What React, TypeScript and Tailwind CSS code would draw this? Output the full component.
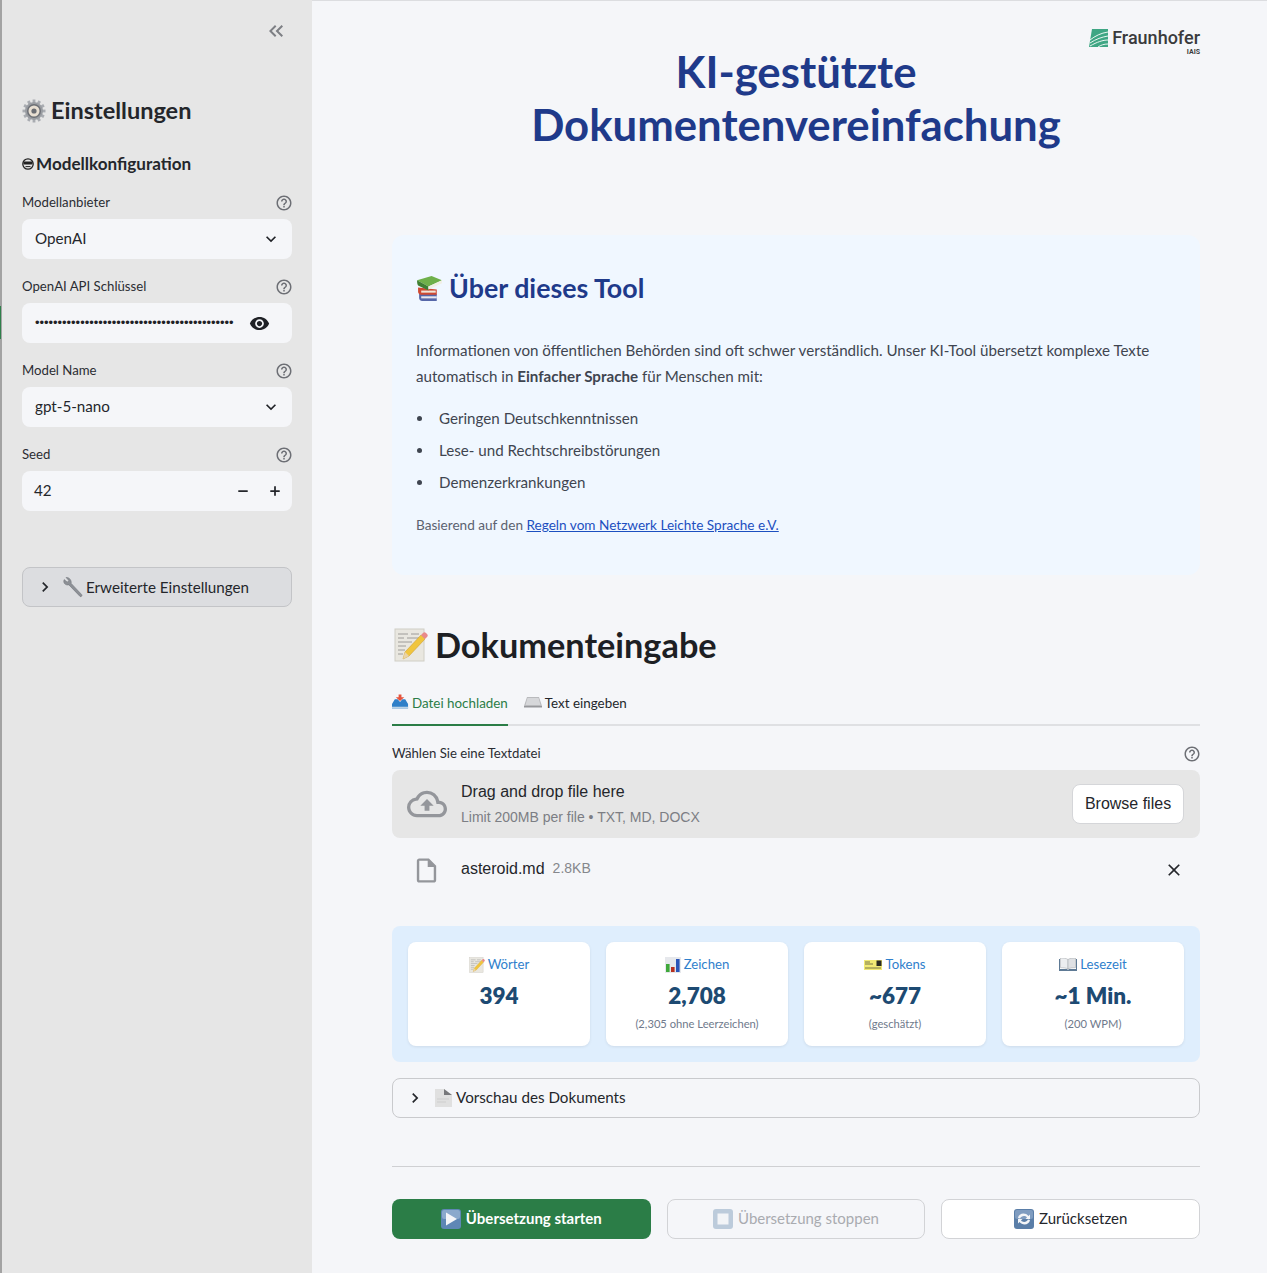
import {
  MdChevronRight,
  MdClose,
  MdExpandMore,
  MdKeyboardDoubleArrowLeft,
  MdOutlineCloudUpload,
  MdOutlineHelpOutline,
  MdOutlineInsertDriveFile,
  MdVisibility,
} from "react-icons/md";
import { Minus, Plus } from "lucide-react";

const Gear = () => (
  <svg viewBox="0 0 24 24" className="h-[24px] w-[24px] shrink-0">
    {[0, 30, 60, 90, 120, 150].map((a) => (
      <rect key={a} x="10.600" y="0.500" width="2.800" height="23" fill="#a9acb1" transform={`rotate(${a} 12 12)`} />
    ))}
    <circle cx="12" cy="12" r="9" fill="#9a9da2" />
    <circle cx="12" cy="12" r="7" fill="#6d7076" />
    <circle cx="12" cy="12" r="5.500" fill="#e8dfd2" />
    <circle cx="12" cy="12" r="2.600" fill="#6a6d73" />
  </svg>
);

const Robot = () => (
  <svg viewBox="0 0 12 12" className="h-[12px] w-[12px] shrink-0">
    <circle cx="6" cy="6" r="5.200" fill="none" stroke="#222" strokeWidth="1.300" />
    <rect x="1.500" y="3.600" width="9" height="3" rx="1" fill="#222" />
    <path d="M3.500 8.600h5" stroke="#222" strokeWidth="1" />
  </svg>
);

const Wrench = () => (
  <svg viewBox="0 0 22 22" className="h-[22px] w-[22px] shrink-0">
    <path d="M4 1.500 6.800 4.400 5.300 6.200 2.200 3.600C1 6 2.400 8.800 5.400 9l1.500-.1L18 20.400c1 .8 2.600-.6 1.800-1.700L9.200 7.400c.6-3-2-6.500-5.200-5.900Z" fill="#8d9096" stroke="#6b6e74" strokeWidth=".5" />
  </svg>
);

const Books = () => (
  <svg viewBox="0 0 26 26" className="h-[27px] w-[27px] shrink-0">
    <path d="M3 18h17v7H6c-2 0-3-1-3-3Z" fill="#5667a8" />
    <path d="M5 20.500h15v2H5Z" fill="#e8e8ee" />
    <path d="M2 12 20 14v5H5c-2 0-3-1-3-3Z" fill="#cf4a32" />
    <path d="M5 15h14v2H5Z" fill="#efe6d8" />
    <path d="M1 5 15 1l10 4-13 6Z" fill="#6fb04a" />
    <path d="M1 5l11 6v4L2 10C1 9 1 6 1 5Z" fill="#3f7f33" />
    <path d="M12 11l13-6v3l-13 6Z" fill="#f1efe4" />
  </svg>
);

const Memo = ({ size }: { size: string }) => (
  <svg viewBox="0 0 34 34" className={`${size} shrink-0`}>
    <rect x="1" y="1" width="29" height="32" fill="#e9e7e0" stroke="#d0cec6" />
    <path d="M4 6h10M17 6h8M4 10h6M13 10h12M4 14h14M4 18h8M4 22h7M4 26h5" stroke="#8a8a88" strokeWidth=".8" />
    <path d="M9 31 11 24 27 7l4 4-16 17Z" fill="#f0c53e" stroke="#c9962a" strokeWidth=".5" />
    <path d="M27 7l2-2c1-1 2-1 3 0l1 1c1 1 1 2 0 3l-2 2Z" fill="#e98a8a" />
    <path d="M9 31l2-7 4 4Z" fill="#e9d3a8" />
  </svg>
);

const Inbox = () => (
  <svg viewBox="0 0 18 16" className="h-[16px] w-[17px] shrink-0">
    <path d="M7 0h3v3h3L8.500 7 4 3h3Z" fill="#e5533d" />
    <path d="M3 5h3l2.500 3L11 5h3l3 5v5H0v-5Z" fill="#2f7fc8" />
    <path d="M0 13h17v2H0Z" fill="#bcd3e6" />
  </svg>
);

const Keyboard = () => (
  <svg viewBox="0 0 18 12" className="h-[12px] w-[18px] shrink-0">
    <path d="M3 1h12l3 9v1H0v-1Z" fill="#b9babd" />
    <path d="M3.500 2h11l2 7H1.500Z" fill="#d6d7da" />
    <path d="M0 10h18v1.500H0Z" fill="#97989c" />
  </svg>
);

const Chart = () => (
  <svg viewBox="0 0 16 16" className="h-[16px] w-[16px] shrink-0">
    <rect width="16" height="16" fill="#e6e8ec" />
    <rect x="1" y="7" width="3.600" height="8" fill="#3fa83a" />
    <rect x="6" y="10" width="3.600" height="5" fill="#b8301f" />
    <rect x="11" y="2" width="3.600" height="13" fill="#2a55b8" />
  </svg>
);

const Ticket = () => (
  <svg viewBox="0 0 18 10" className="h-[10px] w-[18px] shrink-0">
    <rect width="18" height="10" fill="#f2ea74" />
    <path d="M1 2h5M1 4h8M1 8h16" stroke="#5a5a40" strokeWidth=".8" />
    <rect x="12.500" y="0.500" width="5" height="5.500" fill="#2a2a22" />
  </svg>
);

const OpenBook = () => (
  <svg viewBox="0 0 18 14" className="h-[14px] w-[18px] shrink-0">
    <path d="M0 1h1v10h7l1 1 1-1h7V1h1v12H0Z" fill="#5e7a95" />
    <path d="M1.500 0c3 0 6 .3 7.500 1.500V11c-1.500-1-4.500-1.300-7.500-1.300Z" fill="#eceef0" stroke="#8b8f95" strokeWidth=".4" />
    <path d="M16.500 0c-3 0-6 .3-7.500 1.500V11c1.500-1 4.500-1.300 7.500-1.300Z" fill="#dfe1e4" stroke="#8b8f95" strokeWidth=".4" />
  </svg>
);

const Page = () => (
  <svg viewBox="0 0 17 18" className="h-[18px] w-[17px] shrink-0">
    <path d="M0 0h9l8 6v12H0Z" fill="#e0e0e0" />
    <path d="M9 0l8 6H9Z" fill="#77787b" />
    <path d="M2 10h12M2 13h9" stroke="#cecece" />
  </svg>
);

const Play = () => (
  <svg viewBox="0 0 20 20" className="h-[20px] w-[20px] shrink-0">
    <rect width="20" height="20" rx="3" fill="#5f87b5" />
    <rect x="1" y="1" width="18" height="9" rx="2" fill="#8aa9cc" />
    <path d="M5 3.500 16 10 5 16.500Z" fill="#f3f5f8" />
  </svg>
);

const Stop = () => (
  <svg viewBox="0 0 20 20" className="h-[20px] w-[20px] shrink-0">
    <rect width="20" height="20" rx="3" fill="#bccbdb" />
    <rect x="4.500" y="4.500" width="11" height="11" fill="#f2f4f7" />
  </svg>
);

const Refresh = () => (
  <svg viewBox="0 0 20 20" className="h-[20px] w-[20px] shrink-0">
    <rect width="20" height="20" rx="3" fill="#5a7ea8" />
    <rect x="1" y="1" width="18" height="9" rx="2" fill="#7f9cc0" />
    <path d="M4 9c.6-5 7.500-6 10.500-2L16 5.500V10h-4.500L13 8.500C11 6 7 7 6 9.500Z" fill="#f3f5f8" />
    <path d="M16 11c-.6 5-7.500 6-10.500 2L4 14.500V10h4.500L7 11.500C9 14 13 13 14 10.500Z" fill="#f3f5f8" />
  </svg>
);

const Logo = () => (
  <div className="flex flex-col items-end">
    <div className="flex items-center gap-[4px]">
      <svg viewBox="0 0 19 18" className="h-[18px] w-[19px]">
        <path d="M3 0h16v18H0Z" fill="#3fa684" />
        <path d="M1 11C6 7 12 4 19 3M1 14C7 10 13 8 19 7M1 17C8 13 14 11 19 11M9 18c3-2 6-3 10-3" stroke="#eaf6f1" strokeWidth="1" fill="none" />
      </svg>
      <span className="font-['Roboto',sans-serif] text-[18px] leading-[22px] font-medium text-[#3a3b3d]">Fraunhofer</span>
    </div>
    <span className="font-['Roboto',sans-serif] text-[7px] leading-[6px] font-bold text-[#3a3b3d]">IAIS</span>
  </div>
);

const FieldLabel = ({ text }: { text: string }) => (
  <div className="flex h-[16px] items-center justify-between text-[13.200px] text-[#2b2d33]">
    <span>{text}</span>
    <MdOutlineHelpOutline className="-mr-[1px] text-[18px] text-[#6d6f75]" />
  </div>
);

const SelectBox = ({ value }: { value: string }) => (
  <div className="mt-[8px] flex h-[40px] items-center justify-between rounded-[8px] bg-[#f5f6f9] pr-[11px] pl-[13px] text-[15.200px] text-[#24262b]">
    <span className="pb-[2px]">{value}</span>
    <MdExpandMore className="text-[20px] text-[#1f2126]" />
  </div>
);

const Sidebar = () => (
  <aside className="relative flex w-[312px] shrink-0 flex-col border-l-[2px] border-[#a3a3a3] bg-[#e6e6e6] pr-[20px] pl-[20px]">
    <span className="absolute top-[306px] left-[-2px] h-[33px] w-[1px] bg-[#2f7f4a]" />
    <div className="flex h-[62px] items-center justify-end">
      <MdKeyboardDoubleArrowLeft className="mr-[4px] text-[24px] text-[#7d7f84]" />
    </div>
    <div className="mt-[35px] flex h-[28px] items-center gap-[5px]">
      <Gear />
      <h2 className="text-[23.500px] font-bold text-[#24262b]">Einstellungen</h2>
    </div>
    <div className="mt-[27px] flex h-[24px] items-center gap-[2px]">
      <Robot />
      <h3 className="text-[17.100px] font-bold text-[#24262b]">Modellkonfiguration</h3>
    </div>
    <div className="mt-[19px]">
      <FieldLabel text="Modellanbieter" />
      <SelectBox value="OpenAI" />
    </div>
    <div className="mt-[20px]">
      <FieldLabel text="OpenAI API Schlüssel" />
      <div className="mt-[8px] flex h-[40px] items-center rounded-[8px] bg-[#f5f6f9] pl-[13px] text-[#1f2126]">
        <span className="w-[200px] font-['Liberation_Sans',sans-serif] text-[12.900px] leading-none whitespace-nowrap">
          {"•".repeat(44)}
        </span>
        <MdVisibility className="ml-[14px] text-[21px]" />
      </div>
    </div>
    <div className="mt-[20px]">
      <FieldLabel text="Model Name" />
      <SelectBox value="gpt-5-nano" />
    </div>
    <div className="mt-[20px]">
      <FieldLabel text="Seed" />
      <div className="mt-[8px] flex h-[40px] items-center rounded-[8px] bg-[#f5f6f9] pr-[10px] pl-[12px] text-[15.200px] text-[#24262b]">
        <span className="flex-1 pb-[1px]">42</span>
        <Minus className="mr-[18px] h-[14px] w-[14px]" strokeWidth={3} />
        <Plus className="h-[14px] w-[14px]" strokeWidth={3} />
      </div>
    </div>
    <div className="mt-[56px] flex h-[40px] items-center rounded-[8px] border border-[#c3c4c7] bg-[#dcdde0] pl-[12px] text-[15.200px] text-[#24262b]">
      <MdChevronRight className="text-[20px]" />
      <span className="ml-[7px]"><Wrench /></span>
      <span className="ml-[2px]">Erweiterte Einstellungen</span>
    </div>
  </aside>
);

const Stat = ({ icon, label, value, note }: { icon: React.ReactNode; label: string; value: string; note?: string }) => (
  <div className="flex h-[104px] flex-col items-center rounded-[8px] bg-white pt-[15px] shadow-[0_1px_3px_rgba(0,0,0,0.08)]">
    <div className="flex h-[16px] items-center gap-[3px] text-[13.200px] text-[#2f80cc]">
      {icon}
      <span>{label}</span>
    </div>
    <div className="mt-[11px] text-[22.500px] leading-[24px] font-extrabold text-[#1d4a72]">{value}</div>
    {note && <div className="mt-[9px] text-[11.200px] leading-[14px] text-[#6f7a8c]">{note}</div>}
  </div>
);

const Main = () => (
  <main className="relative flex-1 border-t border-[#dcdde0] pr-[67px] pl-[80px]">
    <div className="absolute top-[26px] right-[67px]">
      <Logo />
    </div>
    <h1 className="mt-[44px] text-center text-[43.700px] leading-[53px] font-bold text-[#1f3a8a]">
      KI-gestützte
      <br />
      Dokumentenvereinfachung
    </h1>
    <section className="mt-[84px] h-[340px] rounded-[12px] bg-[#f0f7ff] px-[24px] pt-[35px]">
      <div className="flex h-[36px] items-center gap-[6px]">
        <Books />
        <h2 className="text-[26.800px] font-bold text-[#1f3a8a]">Über dieses Tool</h2>
      </div>
      <p className="mt-[31px] text-[15.150px] leading-[26px] text-[#3f4550]">
        Informationen von öffentlichen Behörden sind oft schwer verständlich. Unser KI-Tool übersetzt komplexe Texte
        <br />
        automatisch in <strong className="font-bold">Einfacher Sprache</strong> für Menschen mit:
      </p>
      <ul className="mt-[16px] flex flex-col gap-[6px] text-[15.150px] leading-[26px] text-[#3f4550]">
        {["Geringen Deutschkenntnissen", "Lese- und Rechtschreibstörungen", "Demenzerkrankungen"].map((t) => (
          <li key={t} className="flex items-center">
            <span className="mr-[17px] ml-[1px] h-[5px] w-[5px] rounded-full bg-[#3f4550]" />
            {t}
          </li>
        ))}
      </ul>
      <p className="mt-[20px] text-[13.600px] leading-[20px] text-[#5b6270]">
        Basierend auf den <a className="text-[#1c4fc0] underline">Regeln vom Netzwerk Leichte Sprache e.V.</a>
      </p>
    </section>
    <div className="mt-[48px] ml-[2px] flex h-[44px] items-center gap-[7px]">
      <Memo size="h-[34px] w-[34px]" />
      <h2 className="text-[34.300px] font-bold text-[#1d1f24]">Dokumenteingabe</h2>
    </div>
    <div className="mt-[26px] flex h-[33px] items-start gap-[16px] border-b-[2px] border-[#dfe0e3] text-[13.400px]">
      <div className="-mb-[2px] flex h-[33px] items-start gap-[3px] border-b-[2px] border-[#2b7d47] pt-[1px] text-[#2b7d47]">
        <Inbox />
        <span className="leading-[18px]">Datei hochladen</span>
      </div>
      <div className="flex items-start gap-[3px] pt-[1px] text-[#24262b]">
        <span className="pt-[2px]"><Keyboard /></span>
        <span className="leading-[18px]">Text eingeben</span>
      </div>
    </div>
    <div className="mt-[20px] flex h-[16px] items-center justify-between text-[13.200px] text-[#2b2d33]">
      <span>Wählen Sie eine Textdatei</span>
      <MdOutlineHelpOutline className="-mr-[1px] text-[18px] text-[#6d6f75]" />
    </div>
    <div className="mt-[8px] flex h-[68px] items-center rounded-[8px] bg-[#e6e6e6] pr-[16px] pl-[15px] font-['Liberation_Sans',sans-serif]">
      <MdOutlineCloudUpload className="text-[40px] text-[#94969b]" />
      <div className="ml-[14px] flex flex-1 flex-col pb-[2px]">
        <span className="text-[16px] leading-[22px] text-[#24262b]">Drag and drop file here</span>
        <span className="mt-[5px] text-[14px] leading-[18px] text-[#7c7e84]">Limit 200MB per file • TXT, MD, DOCX</span>
      </div>
      <div className="flex h-[40px] w-[112px] items-center justify-center rounded-[8px] border border-[#d5d6d9] bg-white pb-[1px] text-[16px] text-[#24262b]">
        Browse files
      </div>
    </div>
    <div className="mt-[16px] flex h-[32px] items-center pr-[16px] pl-[20px] font-['Liberation_Sans',sans-serif]">
      <MdOutlineInsertDriveFile className="text-[29px] text-[#94969b]" />
      <span className="ml-[20px] pb-[3px] text-[16px] text-[#24262b]">asteroid.md</span>
      <span className="ml-[8px] flex-1 pb-[3px] text-[14px] text-[#85878c]">2.8KB</span>
      <MdClose className="text-[20px] text-[#24262b]" />
    </div>
    <div className="mt-[40px] grid h-[136px] grid-cols-4 gap-[16px] rounded-[8px] bg-[#dfeefd] p-[16px]">
      <Stat icon={<Memo size="h-[16px] w-[16px]" />} label="Wörter" value="394" />
      <Stat icon={<Chart />} label="Zeichen" value="2,708" note="(2,305 ohne Leerzeichen)" />
      <Stat icon={<Ticket />} label="Tokens" value="~677" note="(geschätzt)" />
      <Stat icon={<OpenBook />} label="Lesezeit" value="~1 Min." note="(200 WPM)" />
    </div>
    <div className="mt-[16px] flex h-[40px] items-center rounded-[8px] border border-[#c9cacd] pl-[12px] text-[15.200px] text-[#24262b]">
      <MdChevronRight className="text-[20px]" />
      <span className="ml-[10px]"><Page /></span>
      <span className="ml-[4px] pb-[2px]">Vorschau des Dokuments</span>
    </div>
    <hr className="mt-[48px] border-[#cfd0d3]" />
    <div className="mt-[32px] grid h-[40px] grid-cols-3 gap-[16px] text-[15px]">
      <div className="flex items-center justify-center gap-[5px] rounded-[8px] bg-[#2b7d47] font-bold text-white">
        <Play />
        <span className="pb-[2px]">Übersetzung starten</span>
      </div>
      <div className="flex items-center justify-center gap-[5px] rounded-[8px] border border-[#d2d3d6] text-[#a9abb0]">
        <Stop />
        <span className="pb-[2px]">Übersetzung stoppen</span>
      </div>
      <div className="flex items-center justify-center gap-[5px] rounded-[8px] border border-[#d2d3d6] bg-white text-[#24262b]">
        <Refresh />
        <span className="pb-[2px]">Zurücksetzen</span>
      </div>
    </div>
  </main>
);

export default function App() {
  return (
    <div className="flex h-[1273px] overflow-hidden bg-[#f5f6f9] font-['Lato',sans-serif]">
      <Sidebar />
      <Main />
    </div>
  );
}
